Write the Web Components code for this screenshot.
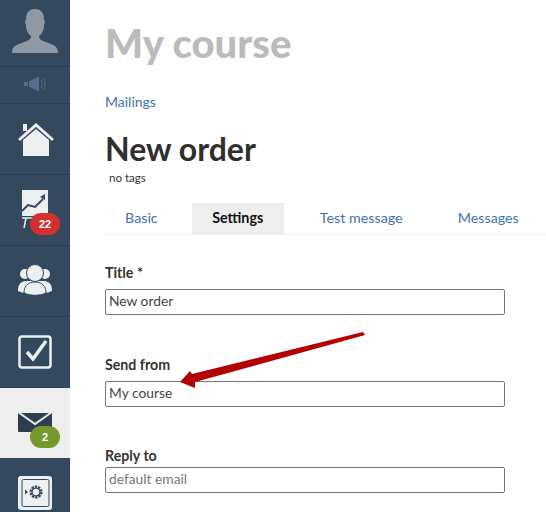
<!DOCTYPE html>
<html>
<head>
<meta charset="utf-8">
<title>New order</title>
<style>
  html, body { margin: 0; padding: 0; height: 100%; overflow: hidden; background: #fff; }
  body { font-family: Lato, "Liberation Sans", sans-serif; }
  app-shell { height: 512px; }
</style>
</head>
<body>
<app-shell>
  <side-bar slot="side">
    <nav-item kind="avatar" h="67"><svg viewBox="0 0 70 66" width="70" height="66"><path d="M12 53c0-5 2-7 7-9l8-3c3-1 4-3 4-5 -3-2-5-6-5-11l-1-3c0-1 1-2 1-3 0-7 4-10 9-10s9 3 9 10c0 1 1 2 1 3l-1 3c0 5-2 9-5 11 0 2 1 4 4 5l8 3c5 2 7 4 7 9z" fill="#8f98a3"/></svg></nav-item>
    <nav-item kind="small" h="37"><svg viewBox="0 0 70 36" width="70" height="36"><path d="M24 15h4v4h-4z M29 14.500l10-5v15l-10-5z" fill="#566f8c"/><path d="M41 13c1.500 2.500 1.500 5.500 0 8M43.500 11c2 3.500 2 8.500 0 12" fill="none" stroke="#566f8c" stroke-width="1"/></svg></nav-item>
    <nav-item h="71"><svg viewBox="0 0 70 70" width="70" height="70"><path d="M23 52V36L36 25 49 36v16z M23 20h4v7h-4z" fill="#ecf0f1"/><path d="M19 36 36 21 53 36" fill="none" stroke="#ecf0f1" stroke-width="3"/></svg></nav-item>
    <nav-item h="71" badge="22" tone="red"><svg viewBox="0 0 70 70" width="70" height="70"><path d="M22 15h26v26H22z" fill="#ecf0f1"/><path d="M22 36l6-6 7 2 8-8" fill="none" stroke="#34495e" stroke-width="2"/><path d="M40 22l5-3v6z" fill="#34495e"/><path d="M22 43h14M26 43l-2 10" stroke="#ecf0f1" stroke-width="1.500" fill="none"/></svg></nav-item>
    <nav-item h="71"><svg viewBox="0 0 70 71" width="70" height="71"><circle cx="25" cy="28" r="5" fill="#ecf0f1"/><circle cx="45" cy="28" r="5" fill="#ecf0f1"/><path d="M18 45c0-6 2-9 7-10h20c5 1 7 4 7 10-3 1-5 2-7 2H25c-2 0-4-1-7-2z" fill="#ecf0f1"/><circle cx="35" cy="27" r="8.500" fill="#ecf0f1" stroke="#34495e" stroke-width="1"/><path d="M24 47c0-7 4-11 11-11s11 4 11 11c-6 3-16 3-22 0z" fill="#ecf0f1" stroke="#34495e" stroke-width="1"/></svg></nav-item>
    <nav-item h="71"><svg viewBox="0 0 70 71" width="70" height="71"><rect x="19.500" y="19.500" width="31" height="31" rx="2.500" fill="none" stroke="#ecf0f1" stroke-width="2.500"/><path d="M27 35l6 7 13-18" fill="none" stroke="#ecf0f1" stroke-width="3.500"/></svg></nav-item>
    <nav-item h="70" active badge="2" tone="green"><svg viewBox="0 0 70 70" width="70" height="70"><path d="M18 25h34v18a1 1 0 0 1-1 1H19a1 1 0 0 1-1-1z" fill="#2c3e50"/><path d="M18 24l17 12 17-12" fill="none" stroke="#eee" stroke-width="2"/></svg></nav-item>
    <nav-item h="53"><svg viewBox="0 0 70 53" width="70" height="53"><rect x="18" y="18" width="34" height="34" rx="3" fill="#ecf0f1"/><rect x="22" y="21.500" width="27" height="27" rx="1.500" fill="none" stroke="#34495e" stroke-width="1"/><circle cx="36" cy="34" r="5" fill="none" stroke="#34495e" stroke-width="3" stroke-dasharray="2.200 0.900"/><circle cx="36" cy="34" r="4" fill="none" stroke="#34495e" stroke-width="1"/><path d="M25 31.500l3 2.500-3 2.500z" fill="#34495e"/></svg></nav-item>
  </side-bar>

  <course-title>My course</course-title>
  <crumb-link>Mailings</crumb-link>
  <page-title>New order</page-title>
  <tag-line>no tags</tag-line>
  <tab-bar>
    <tab-item gap="14">Basic</tab-item>
    <tab-item gap="16" active>Settings</tab-item>
    <tab-item gap="15">Test message</tab-item>
    <tab-item>Messages</tab-item>
  </tab-bar>
  <form-field label="Title *" value="New order" top="29"></form-field>
  <form-field label="Send from" value="My course" top="41"></form-field>
  <form-field label="Reply to" placeholder="default email" top="40" tight></form-field>

  <arrow-note></arrow-note>
</app-shell>

<script>
function define(name, css, html, setup) {
  customElements.define(name, class extends HTMLElement {
    constructor() {
      super();
      this.attachShadow({ mode: "open" }).innerHTML = `<style>${css}</style>${html}`;
    }
    connectedCallback() {
      if (setup) setup(this, this.shadowRoot);
    }
  });
}

define("app-shell", `
  :host { display: grid; grid-template-columns: 70px 1fr; position: relative; }
  .side { grid-row: 1; grid-column: 1; overflow: hidden; height: 512px; }
  .main { grid-row: 1; grid-column: 2; padding-left: 35px; min-width: 0; }
`, `<div class="side"><slot name="side"></slot></div><div class="main"><slot></slot></div>`);

define("side-bar", `
  :host { display: flex; flex-direction: column; width: 70px; height: 512px; background: #34495e; }
`, `<slot></slot>`);

define("nav-item", `
  :host { display: block; position: relative; flex: none; box-sizing: border-box; border-bottom: 1px solid #2b3c50; }
  :host([active]) { background: #eee; border-bottom: 0; }
  :host([h="53"]) { border-bottom: 0; }
  ::slotted(svg) { display: block; }
  .badge { position: absolute; left: 30px; top: 38px; width: 30px; height: 22px; border-radius: 11px;
    color: #fff; font: 700 11px "Liberation Sans", sans-serif; display: flex; align-items: center; justify-content: center; }
  .red { background: #d32f2f; }
  .green { background: #76992b; }
`, `<slot></slot>`, (el, root) => {
  el.style.height = el.getAttribute("h") + "px";
  if (el.hasAttribute("badge")) {
    const b = document.createElement("span");
    b.className = "badge " + (el.getAttribute("tone") === "red" ? "red" : "green");
    b.textContent = el.getAttribute("badge");
    root.appendChild(b);
  }
});

define("course-title", `
  :host { display: block; padding-top: 18px; height: 66px; font-size: 40px; line-height: 50px; font-weight: 900; color: #bbb; }
`, `<slot></slot>`);

define("crumb-link", `
  :host { display: block; margin-top: 9px; font-size: 14px; line-height: 18px; color: #3f72ad; }
`, `<slot></slot>`);

define("page-title", `
  :host { display: block; margin-top: 18px; font-size: 32px; line-height: 40px; font-weight: 700; color: #2f2f2f; }
`, `<slot></slot>`);

define("tag-line", `
  :host { display: block; padding-left: 4px; margin-top: 1px; font-size: 11.500px; line-height: 16px; color: #333; }
`, `<slot></slot>`);

define("tab-bar", `
  :host { display: flex; margin-top: 17px; height: 31px; border-bottom: 1px solid #eee; }
`, `<slot></slot>`);

define("tab-item", `
  :host { display: flex; box-sizing: border-box; height: 31px; align-items: center; justify-content: center;
    font-size: 14.300px; color: #3f72ad; padding: 0 20px 3px; }
  :host([active]) { background: #eee; color: #111; font-weight: 700; padding: 0 20.500px 3px; }
`, `<slot></slot>`, (el) => {
  if (el.hasAttribute("gap")) el.style.marginRight = el.getAttribute("gap") + "px";
});

define("form-field", `
  :host { display: block; width: 400px; }
  label { display: block; font-size: 14.200px; line-height: 18px; font-weight: 700; color: #333; margin-bottom: 7px; }
  :host([tight]) label { margin-bottom: 2px; }
  .box { box-sizing: border-box; height: 26px; border: 1px solid #767676; border-radius: 2px; padding: 0 3px;
    font-size: 13.800px; line-height: 22px; color: #444; }
  .ph { color: #777; }
`, `<label></label><div class="box"></div>`, (el, root) => {
  el.style.marginTop = el.getAttribute("top") + "px";
  root.querySelector("label").textContent = el.getAttribute("label");
  const box = root.querySelector(".box");
  if (el.hasAttribute("placeholder")) {
    box.textContent = el.getAttribute("placeholder");
    box.classList.add("ph");
  } else {
    box.textContent = el.getAttribute("value");
  }
});

// annotation drawn over the form
define("arrow-note", `
  :host { display: block; position: absolute; left: 170px; top: 325px; width: 200px; height: 70px; }
  svg { display: block; }
`, `<svg viewBox="0 0 200 70" width="200" height="70">
  <path d="M193 7 22 49 20 46 10 57 25 63 25 57 195 10z" fill="#b30000"/>
</svg>`);
</script>
</body>
</html>
